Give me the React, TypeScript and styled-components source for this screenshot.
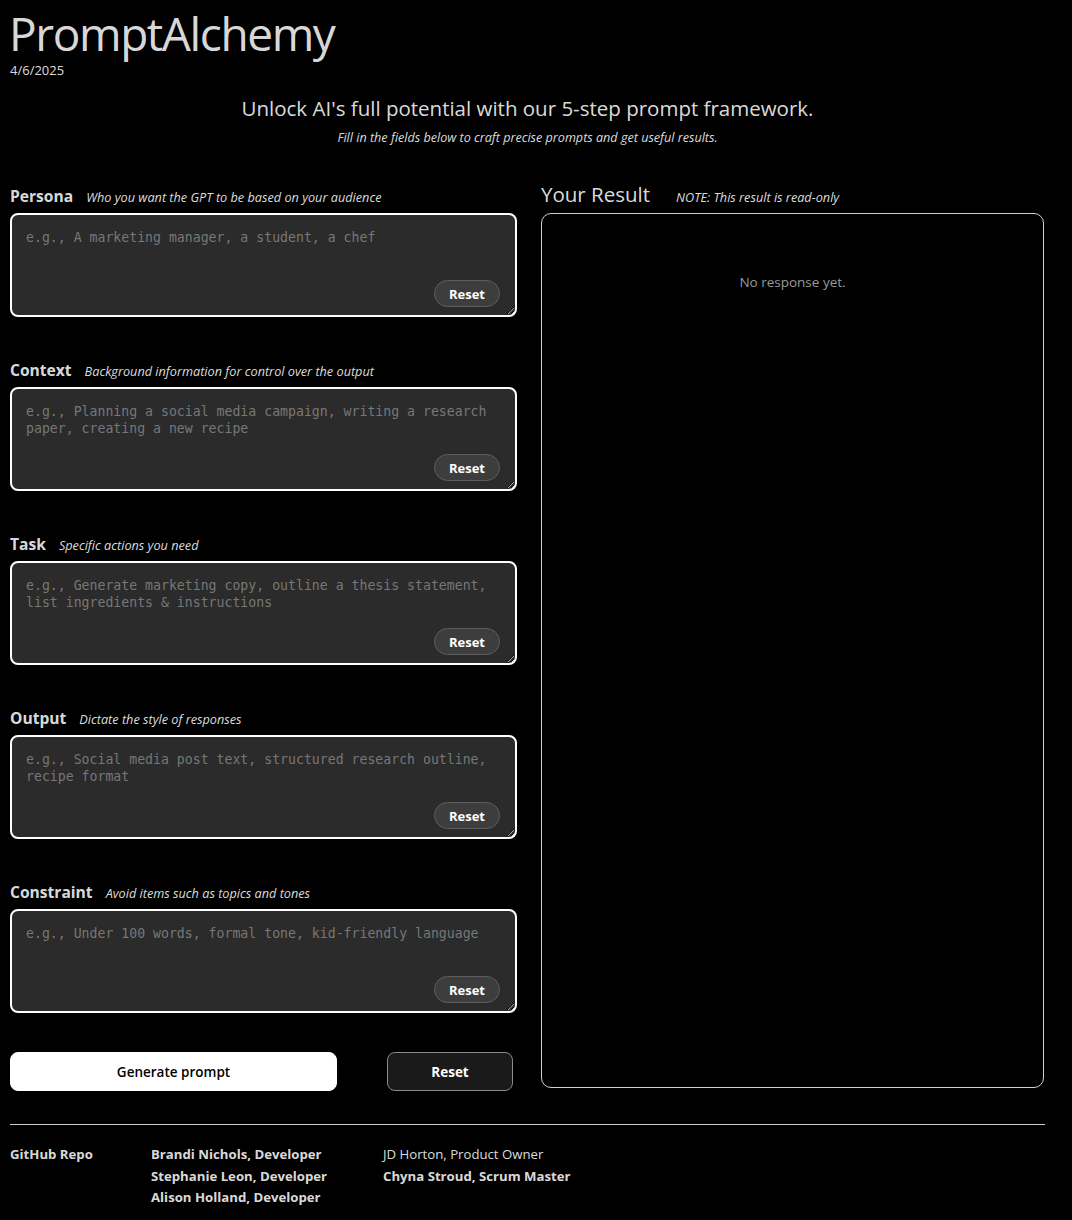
import { useState } from "react";
import styled, { createGlobalStyle } from "styled-components";

// page wide defaults
const GlobalStyle = createGlobalStyle`
  body {
    margin: 0;
    background: #000;
    color: rgba(255, 255, 255, 0.87);
    font-family: "Open Sans", "Noto Sans", sans-serif;
  }
`;

const Page = styled.div`
  width: 1035px;
  padding: 0 0 20px 10px;
`;

const Title = styled.h1`
  font-size: 46px;
  font-weight: 400;
  line-height: 50px;
  margin: 8px 0 0 -1px;
  letter-spacing: -1.4px;
`;

const DateText = styled.div`
  font-size: 13px;
  line-height: 18px;
  margin-top: 3px;
`;

const Hero = styled.div`
  text-align: center;
  margin-top: 14px;
`;

const Headline = styled.h2`
  font-size: 20.5px;
  font-weight: 400;
  margin: 0;
  line-height: 30px;
`;

const SubLine = styled.p`
  font-size: 12.6px;
  font-style: italic;
  margin: 6px 0 0;
`;

const Main = styled.div`
  display: grid;
  grid-template-columns: 507px 503px;
  column-gap: 24px;
  margin-top: 41px;
`;

const LeftColumn = styled.div`
  display: flex;
  flex-direction: column;
`;

const Section = styled.div`
  display: flex;
  flex-direction: column;
  margin-bottom: 44px;
`;

// label and hint on one line
const LabelRow = styled.div`
  display: flex;
  align-items: baseline;
  gap: 13px;
  height: 28px;
  margin-top: -2px;
`;

const FieldName = styled.span`
  font-size: 15.6px;
  font-weight: 700;
`;

const Hint = styled.span`
  font-size: 12.7px;
  font-style: italic;
`;

const FieldBox = styled.div`
  position: relative;
`;

const Area = styled.textarea`
  display: block;
  box-sizing: border-box;
  width: 100%;
  height: 104px;
  padding: 14px 14px;
  background: #2b2b2b;
  border: 2px solid #fff;
  border-radius: 8px;
  color: #ddd;
  font-family: "DejaVu Sans Mono", "Liberation Mono", monospace;
  font-size: 13.2px;
  line-height: 17px;
  resize: vertical;
  outline: none;

  &::placeholder {
    color: #777;
  }
`;

// small pill sitting over the textarea corner
const PillReset = styled.button`
  position: absolute;
  right: 17px;
  bottom: 10px;
  width: 66px;
  height: 27px;
  background: #3d3d3d;
  border: 1px solid #5e5e5e;
  border-radius: 14px;
  color: #fff;
  font-family: inherit;
  font-size: 13px;
  font-weight: 700;
  cursor: pointer;
`;

const ButtonRow = styled.div`
  display: flex;
  gap: 50px;
  margin-top: -5px;
`;

const GenerateButton = styled.button`
  width: 327px;
  height: 39px;
  background: #fff;
  color: #000;
  border: 1px solid #fff;
  border-radius: 8px;
  font-family: inherit;
  font-size: 13.5px;
  font-weight: 600;
  cursor: pointer;
`;

const ClearButton = styled.button`
  width: 126px;
  height: 39px;
  background: #1a1a1a;
  color: #fff;
  border: 1px solid #8a8a8a;
  border-radius: 8px;
  font-family: inherit;
  font-size: 13.5px;
  font-weight: 700;
  cursor: pointer;
`;

const RightColumn = styled.div`
  display: flex;
  flex-direction: column;
`;

const ResultHead = styled.div`
  display: flex;
  align-items: baseline;
  gap: 26px;
  height: 29px;
  margin-top: -7px;
  padding-bottom: 4px;
`;

const ResultTitle = styled.span`
  font-size: 20.5px;
`;

const ResultBox = styled.div`
  flex: 1;
  border: 1px solid #d0d0d0;
  border-radius: 10px;
  margin-bottom: 3px;
  text-align: center;
  padding-top: 56px;
`;

const Empty = styled.span`
  color: #9a9a9a;
  font-size: 13.5px;
`;

const Rule = styled.hr`
  border: none;
  border-top: 1px solid #ccc;
  margin: 33px 0 0;
`;

const Footer = styled.div`
  display: grid;
  grid-template-columns: 141px 232px 1fr;
  margin-top: 19px;
  font-size: 13.2px;
  line-height: 21.5px;
`;

const FooterCol = styled.div`
  display: flex;
  flex-direction: column;
`;

const Credit = styled.span<{ $plain?: boolean }>`
  font-weight: ${(p) => (p.$plain ? 400 : 700)};
`;

const fields = [
  {
    name: "Persona",
    hint: "Who you want the GPT to be based on your audience",
    placeholder: "e.g., A marketing manager, a student, a chef",
  },
  {
    name: "Context",
    hint: "Background information for control over the output",
    placeholder:
      "e.g., Planning a social media campaign, writing a research paper, creating a new recipe",
  },
  {
    name: "Task",
    hint: "Specific actions you need",
    placeholder:
      "e.g., Generate marketing copy, outline a thesis statement, list ingredients & instructions",
  },
  {
    name: "Output",
    hint: "Dictate the style of responses",
    placeholder:
      "e.g., Social media post text, structured research outline, recipe format",
  },
  {
    name: "Constraint",
    hint: "Avoid items such as topics and tones",
    placeholder: "e.g., Under 100 words, formal tone, kid-friendly language",
  },
];

function App() {
  const [values, setValues] = useState<string[]>(fields.map(() => ""));

  function setOne(i: number, v: string) {
    const next = [...values];
    next[i] = v;
    setValues(next);
  }

  return (
    <>
      <GlobalStyle />
      <Page>
        <Title>PromptAlchemy</Title>
        <DateText>4/6/2025</DateText>

        <Hero>
          <Headline>Unlock AI's full potential with our 5-step prompt framework.</Headline>
          <SubLine>Fill in the fields below to craft precise prompts and get useful results.</SubLine>
        </Hero>

        <Main>
          <LeftColumn>
            {fields.map((f, i) => (
              <Section key={f.name}>
                <LabelRow>
                  <FieldName>{f.name}</FieldName>
                  <Hint>{f.hint}</Hint>
                </LabelRow>
                <FieldBox>
                  <Area
                    placeholder={f.placeholder}
                    value={values[i]}
                    onChange={(e) => setOne(i, e.target.value)}
                  />
                  <PillReset onClick={() => setOne(i, "")}>Reset</PillReset>
                </FieldBox>
              </Section>
            ))}

            <ButtonRow>
              <GenerateButton>Generate prompt</GenerateButton>
              <ClearButton onClick={() => setValues(fields.map(() => ""))}>Reset</ClearButton>
            </ButtonRow>
          </LeftColumn>

          <RightColumn>
            <ResultHead>
              <ResultTitle>Your Result</ResultTitle>
              <Hint>NOTE: This result is read-only</Hint>
            </ResultHead>
            <ResultBox>
              <Empty>No response yet.</Empty>
            </ResultBox>
          </RightColumn>
        </Main>

        <Rule />

        <Footer>
          <FooterCol>
            <Credit>GitHub Repo</Credit>
          </FooterCol>
          <FooterCol>
            <Credit>Brandi Nichols, Developer</Credit>
            <Credit>Stephanie Leon, Developer</Credit>
            <Credit>Alison Holland, Developer</Credit>
          </FooterCol>
          <FooterCol>
            <Credit $plain>JD Horton, Product Owner</Credit>
            <Credit>Chyna Stroud, Scrum Master</Credit>
          </FooterCol>
        </Footer>
      </Page>
    </>
  );
}

export default App;
